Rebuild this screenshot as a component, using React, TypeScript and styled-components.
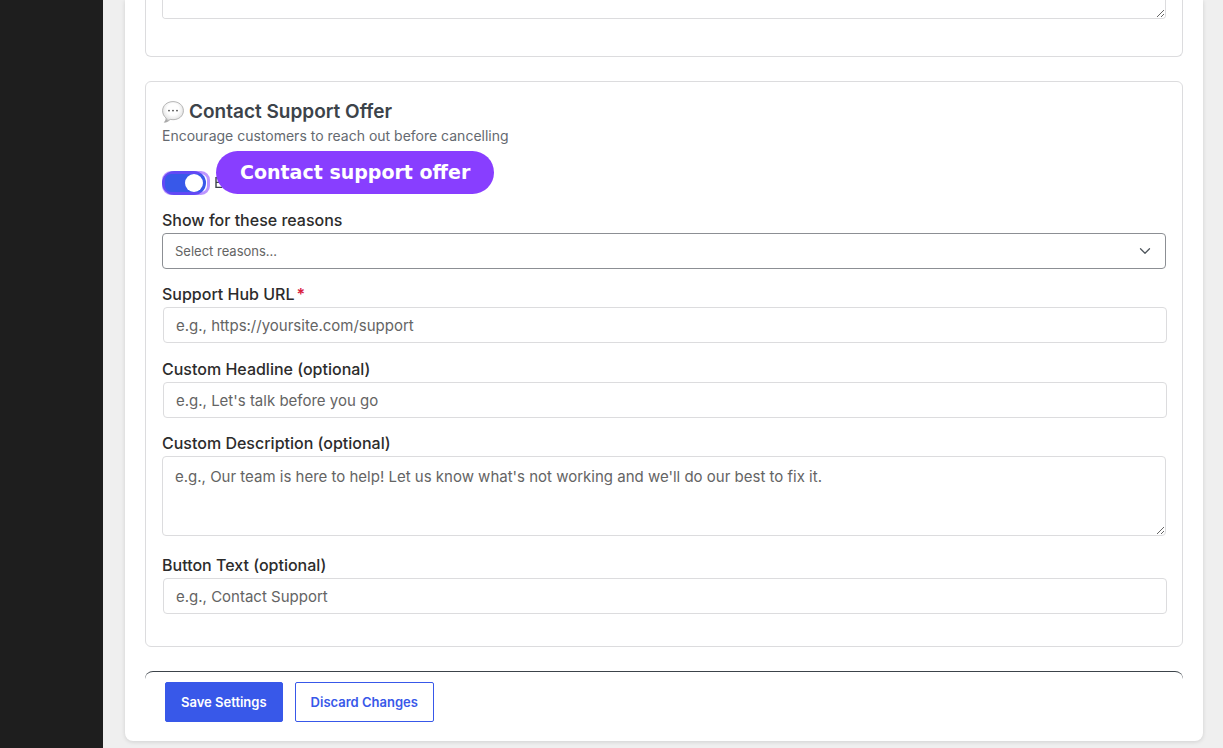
import React, { useState } from "react";
import styled, { createGlobalStyle } from "styled-components";
import { ChevronDown } from "lucide-react";

const GlobalStyle = createGlobalStyle`
  *, *::before, *::after { box-sizing: border-box; }
  body {
    margin: 0;
    background: #efefef;
    color: #3c434a;
    font-family: Inter, "Liberation Sans", sans-serif;
    font-size: 14px;
  }
`;

const Page = styled.div`
  display: flex;
  min-height: 100vh;
`;

const Sidebar = styled.aside`
  flex: 0 0 103px;
  background: #1e1e1e;
`;

const Main = styled.main`
  flex: 1;
  min-width: 0;
  padding: 0 20px 7px 22px;
`;

const Card = styled.form`
  display: flex;
  flex-direction: column;
  gap: 24px;
  padding: 0 20px;
  background: #fff;
  border-radius: 0 0 8px 8px;
  box-shadow: 0 1px 4px rgba(0, 0, 0, 0.13);
`;

const Section = styled.section`
  padding: 16px 16px 18px;
  border: 1px solid #dcdcde;
  border-radius: 6px;
`;

const PreviousSection = styled(Section)`
  padding: 0 16px 37px;
  border-top: 0;
  border-radius: 0 0 6px 6px;
`;

const Heading = styled.h2`
  display: flex;
  align-items: center;
  gap: 5px;
  margin: 0;
  color: #3c434a;
  font-size: 19px;
  font-weight: 600;
  line-height: 28px;
`;

const Summary = styled.p`
  margin: 0 0 25px;
  color: #646970;
  font-size: 14px;
  line-height: 20px;
`;

const ToggleRow = styled.div`
  position: relative;
  display: flex;
  align-items: center;
  gap: 4px;
  height: 24px;
  margin-bottom: 13px;
`;

const ToggleFrame = styled.span`
  position: relative;
  display: flex;
  width: 48px;
  height: 24px;

  &::after {
    content: "";
    position: absolute;
    inset: 0;
    border: 3px solid rgba(133, 62, 255, 0.55);
    border-radius: 9px;
    pointer-events: none;
  }
`;

const Toggle = styled.input`
  appearance: none;
  display: flex;
  align-items: center;
  justify-content: flex-end;
  width: 44px;
  height: 24px;
  margin: 0;
  padding: 3px;
  border-radius: 12px;
  background: #3858e9;

  &:not(:checked) {
    justify-content: flex-start;
    background: #8c8f94;
  }

  &::before {
    content: "";
    width: 18px;
    height: 18px;
    border-radius: 50%;
    background: #fff;
  }
`;

const ToggleLabel = styled.label`
  font-size: 15px;
  line-height: 24px;
`;

const Callout = styled.div`
  position: absolute;
  top: -20px;
  left: 54px;
  padding: 0 24px;
  border-radius: 22px;
  background: #883eff;
  color: #fff;
  font-family: "DejaVu Sans", sans-serif;
  font-size: 19px;
  font-weight: 700;
  line-height: 43px;
  white-space: nowrap;
`;

const Field = styled.div<{ $gap: number }>`
  margin-bottom: ${(p) => p.$gap}px;
`;

const Label = styled.label`
  display: block;
  color: #2c2c2c;
  font-size: 16px;
  font-weight: 500;
  line-height: 25px;
`;

const Required = styled.span`
  margin-left: 2px;
  color: #d9213f;
  font-weight: 600;
`;

const TextInput = styled.input`
  display: block;
  width: 100%;
  height: 36px;
  margin: 0 1px;
  padding: 0 12px;
  border: 1px solid #dcdcde;
  border-radius: 4px;
  background: #fff;
  color: #2c3338;
  font: 400 15px/24px Inter, "Liberation Sans", sans-serif;

  &::placeholder { color: #646464; opacity: 1; }
`;

const TextArea = styled.textarea`
  display: block;
  width: 100%;
  height: 80px;
  padding: 8px 12px;
  border: 1px solid #dcdcde;
  border-radius: 4px;
  background: #fff;
  color: #2c3338;
  font: 400 15px/24px Inter, "Liberation Sans", sans-serif;
  resize: vertical;

  &::placeholder { color: #646464; opacity: 1; }
`;

const ClippedTextArea = styled(TextArea)`
  height: 19px;
  padding: 0;
  border-top: 0;
  border-radius: 0 0 4px 4px;
`;

const SelectBox = styled.div`
  display: grid;
  align-items: center;

  > * { grid-area: 1 / 1; }

  > svg {
    justify-self: end;
    margin-right: 12px;
    color: #50575e;
    pointer-events: none;
  }
`;

const Select = styled.select`
  appearance: none;
  width: 100%;
  height: 36px;
  padding: 0 12px;
  border: 1px solid #8c8f94;
  border-radius: 4px;
  background: #fff;
  color: #646464;
  font: 400 13px/20px Inter, "Liberation Sans", sans-serif;
`;

const Footer = styled.footer`
  display: flex;
  gap: 12px;
  padding: 10px 20px 19px;
  border-top: 1px solid #3c434a;
  border-radius: 8px;
`;

const Button = styled.button<{ $primary?: boolean }>`
  height: 40px;
  padding: 0 15px;
  border: 1px solid #3858e9;
  border-radius: 2px;
  background: ${(p) => (p.$primary ? "#3858e9" : "#fff")};
  color: ${(p) => (p.$primary ? "#fff" : "#3858e9")};
  font: 600 13px/20px Inter, "Liberation Sans", sans-serif;
`;

const SpeechIcon = () => (
  <svg width="22" height="22" viewBox="0 0 22 22" aria-hidden="true">
    <defs>
      <radialGradient id="bubble" cx="0.5" cy="0.38" r="0.62">
        <stop offset="0.45" stopColor="#fff" />
        <stop offset="0.8" stopColor="#e6e6e6" />
        <stop offset="1" stopColor="#a8a8a8" />
      </radialGradient>
    </defs>
    <path
      d="M11 .6C16.8.6 21.4 4.4 21.4 9.7S16.8 18.7 11 18.7c-1 0-2-.1-2.900-.3-1.400 1.600-3.500 2.700-5.700 2.900 1.100-1.200 1.700-2.600 1.700-4.300C1.900 15.300.6 12.700.6 9.700.6 4.400 5.200.6 11 .6Z"
      fill="url(#bubble)"
      stroke="#a6a6a6"
      strokeWidth="0.8"
    />
    <g fill="#4a4a4a">
      <circle cx="7" cy="9.600" r="0.9" />
      <circle cx="11" cy="9.600" r="0.9" />
      <circle cx="15" cy="9.600" r="0.9" />
    </g>
  </svg>
);

export default function App() {
  const [enabled, setEnabled] = useState(true);

  return (
    <>
      <GlobalStyle />
      <Page>
        <Sidebar />
        <Main>
          <Card onSubmit={(e) => e.preventDefault()}>
            <PreviousSection>
              <ClippedTextArea aria-label="Description" />
            </PreviousSection>

            <Section>
              <Heading>
                <SpeechIcon />
                Contact Support Offer
              </Heading>
              <Summary>Encourage customers to reach out before cancelling</Summary>

              <ToggleRow>
                <ToggleFrame>
                  <Toggle
                    id="enable"
                    type="checkbox"
                    role="switch"
                    checked={enabled}
                    onChange={(e) => setEnabled(e.target.checked)}
                  />
                </ToggleFrame>
                <ToggleLabel htmlFor="enable">Enable</ToggleLabel>
                <Callout>Contact support offer</Callout>
              </ToggleRow>

              <Field $gap={13}>
                <Label htmlFor="reasons">Show for these reasons</Label>
                <SelectBox>
                  <Select id="reasons">
                    <option>Select reasons...</option>
                  </Select>
                  <ChevronDown size={18} strokeWidth={1.75} />
                </SelectBox>
              </Field>
              <Field $gap={14}>
                <Label htmlFor="url">
                  Support Hub URL<Required>*</Required>
                </Label>
                <TextInput id="url" type="url" placeholder="e.g., https://yoursite.com/support" />
              </Field>
              <Field $gap={13}>
                <Label htmlFor="headline">Custom Headline (optional)</Label>
                <TextInput id="headline" placeholder="e.g., Let's talk before you go" />
              </Field>
              <Field $gap={17}>
                <Label htmlFor="description">Custom Description (optional)</Label>
                <TextArea
                  id="description"
                  placeholder="e.g., Our team is here to help! Let us know what's not working and we'll do our best to fix it."
                />
              </Field>
              <Field $gap={14}>
                <Label htmlFor="button-text">Button Text (optional)</Label>
                <TextInput id="button-text" placeholder="e.g., Contact Support" />
              </Field>
            </Section>

            <Footer>
              <Button type="submit" $primary>Save Settings</Button>
              <Button type="button">Discard Changes</Button>
            </Footer>
          </Card>
        </Main>
      </Page>
    </>
  );
}
